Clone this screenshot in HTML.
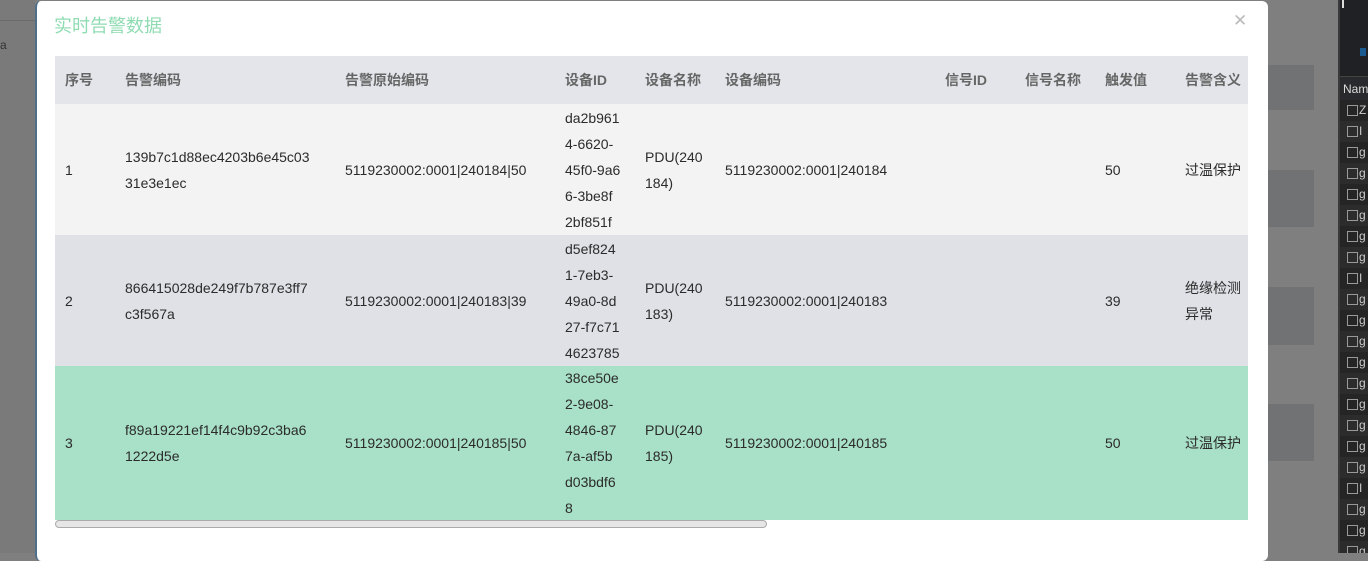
<!DOCTYPE html>
<html><head><meta charset="utf-8"><style>
*{margin:0;padding:0;box-sizing:border-box}
body{width:1368px;height:553px;overflow:hidden;background:#7f7f7f;position:relative;font-family:"Liberation Sans","Noto Sans CJK SC",sans-serif;font-size:14px;color:#2b2b2b}
.blk{position:absolute;left:1268px;width:46px;background:#717273}
.modal{position:absolute;left:35px;top:1px;width:1233px;height:560px;background:#fff;border-radius:6px;border-left:2px solid #4d6f8c}
.title{position:absolute;left:54px;top:12px;font-size:18px;color:#8fdcb3}
.close{position:absolute;left:1233px;top:11px;font-size:17px;color:#bbb}
.row{position:absolute;left:55px;width:1193px}
.c{position:absolute;top:0;height:100%;display:flex;align-items:center;line-height:26px;white-space:nowrap}
.h .c{color:#666;font-weight:bold}
.side{position:absolute;left:1338px;top:0;width:30px;height:553px;background:#1f1f1f;border-left:2px solid #3a3a3a;overflow:hidden}
.sr{position:absolute;left:0;width:40px;height:21px;font-size:12px;color:#ccc;padding-left:19px;line-height:21px;white-space:nowrap}
.sr:before{content:"";position:absolute;left:7px;top:5px;width:9px;height:9px;border:1px solid #999}
</style></head><body>
<div style="position:absolute;left:0;top:0;width:35px;height:553px;background:#7a7a7a"></div>
<div style="position:absolute;left:0;top:20px;width:35px;height:1px;background:#6a6a6a"></div>
<div style="position:absolute;left:0;top:38px;font-size:12px;color:#333">a</div>
<div class="blk" style="top:65px;height:45px"></div>
<div class="blk" style="top:170px;height:57px"></div>
<div class="blk" style="top:287px;height:58px"></div>
<div class="blk" style="top:404px;height:57px"></div>
<div class="modal"></div>
<div class="title">实时告警数据</div>
<div class="close">✕</div>

<div class="row h" style="top:56px;height:48px;background:#e4e5ea">
<div class="c" style="left:10px">序号</div><div class="c" style="left:70px">告警编码</div><div class="c" style="left:290px">告警原始编码</div><div class="c" style="left:510px">设备ID</div><div class="c" style="left:590px">设备名称</div><div class="c" style="left:670px">设备编码</div><div class="c" style="left:890px">信号ID</div><div class="c" style="left:970px">信号名称</div><div class="c" style="left:1050px">触发值</div><div class="c" style="left:1130px">告警含义</div>
</div>

<div class="row" style="top:104px;height:131px;background:#f3f3f3">
<div class="c" style="left:10px">1</div><div class="c" style="left:70px">139b7c1d88ec4203b6e45c03<br>31e3e1ec</div><div class="c" style="left:290px">5119230002:0001|240184|50</div><div class="c" style="left:510px">da2b961<br>4-6620-<br>45f0-9a6<br>6-3be8f<br>2bf851f</div><div class="c" style="left:590px">PDU(240<br>184)</div><div class="c" style="left:670px">5119230002:0001|240184</div><div class="c" style="left:1050px">50</div><div class="c" style="left:1130px">过温保护</div>
</div>

<div class="row" style="top:235px;height:131px;background:#dfe1e6">
<div class="c" style="left:10px">2</div><div class="c" style="left:70px">866415028de249f7b787e3ff7<br>c3f567a</div><div class="c" style="left:290px">5119230002:0001|240183|39</div><div class="c" style="left:510px">d5ef824<br>1-7eb3-<br>49a0-8d<br>27-f7c71<br>4623785</div><div class="c" style="left:590px">PDU(240<br>183)</div><div class="c" style="left:670px">5119230002:0001|240183</div><div class="c" style="left:1050px">39</div><div class="c" style="left:1130px">绝缘检测<br>异常</div>
</div>

<div class="row" style="top:366px;height:154px;background:#a8e0c8">
<div class="c" style="left:10px">3</div><div class="c" style="left:70px">f89a19221ef14f4c9b92c3ba6<br>1222d5e</div><div class="c" style="left:290px">5119230002:0001|240185|50</div><div class="c" style="left:510px">38ce50e<br>2-9e08-<br>4846-87<br>7a-af5b<br>d03bdf6<br>8</div><div class="c" style="left:590px">PDU(240<br>185)</div><div class="c" style="left:670px">5119230002:0001|240185</div><div class="c" style="left:1050px">50</div><div class="c" style="left:1130px">过温保护</div>
</div>

<div style="position:absolute;left:55px;top:520px;width:712px;height:8px;border:1px solid #aaa;border-radius:4px;background:#e6e6e6"></div>

<div class="side">
<div style="position:absolute;left:0;top:0;width:30px;height:75px;background:#202124"></div>
<div style="position:absolute;left:2px;top:0;width:2px;height:8px;background:#ddd"></div>
<div style="position:absolute;left:20px;top:48px;width:6px;height:8px;background:#1a5a90"></div>
<div style="position:absolute;left:0;top:76px;width:30px;height:25px;background:#292a2d;color:#ddd;font-size:12px;line-height:25px;padding-left:3px;border-top:1px solid #444;border-bottom:1px solid #444">Nam</div>
<div class="sr" style="top:100px;background:#252525">Z</div>
<div class="sr" style="top:121px;background:#2c2c2c">I</div>
<div class="sr" style="top:142px;background:#252525">g</div>
<div class="sr" style="top:163px;background:#2c2c2c">g</div>
<div class="sr" style="top:184px;background:#252525">g</div>
<div class="sr" style="top:205px;background:#2c2c2c">g</div>
<div class="sr" style="top:226px;background:#252525">g</div>
<div class="sr" style="top:247px;background:#2c2c2c">g</div>
<div class="sr" style="top:268px;background:#252525">I</div>
<div class="sr" style="top:289px;background:#2c2c2c">g</div>
<div class="sr" style="top:310px;background:#252525">g</div>
<div class="sr" style="top:331px;background:#2c2c2c">g</div>
<div class="sr" style="top:352px;background:#252525">g</div>
<div class="sr" style="top:373px;background:#2c2c2c">g</div>
<div class="sr" style="top:394px;background:#252525">g</div>
<div class="sr" style="top:415px;background:#2c2c2c">g</div>
<div class="sr" style="top:436px;background:#252525">g</div>
<div class="sr" style="top:457px;background:#2c2c2c">g</div>
<div class="sr" style="top:478px;background:#252525">I</div>
<div class="sr" style="top:499px;background:#2c2c2c">g</div>
<div class="sr" style="top:520px;background:#252525">g</div>
<div class="sr" style="top:541px;background:#2c2c2c">g</div>
</div>
</body></html>
